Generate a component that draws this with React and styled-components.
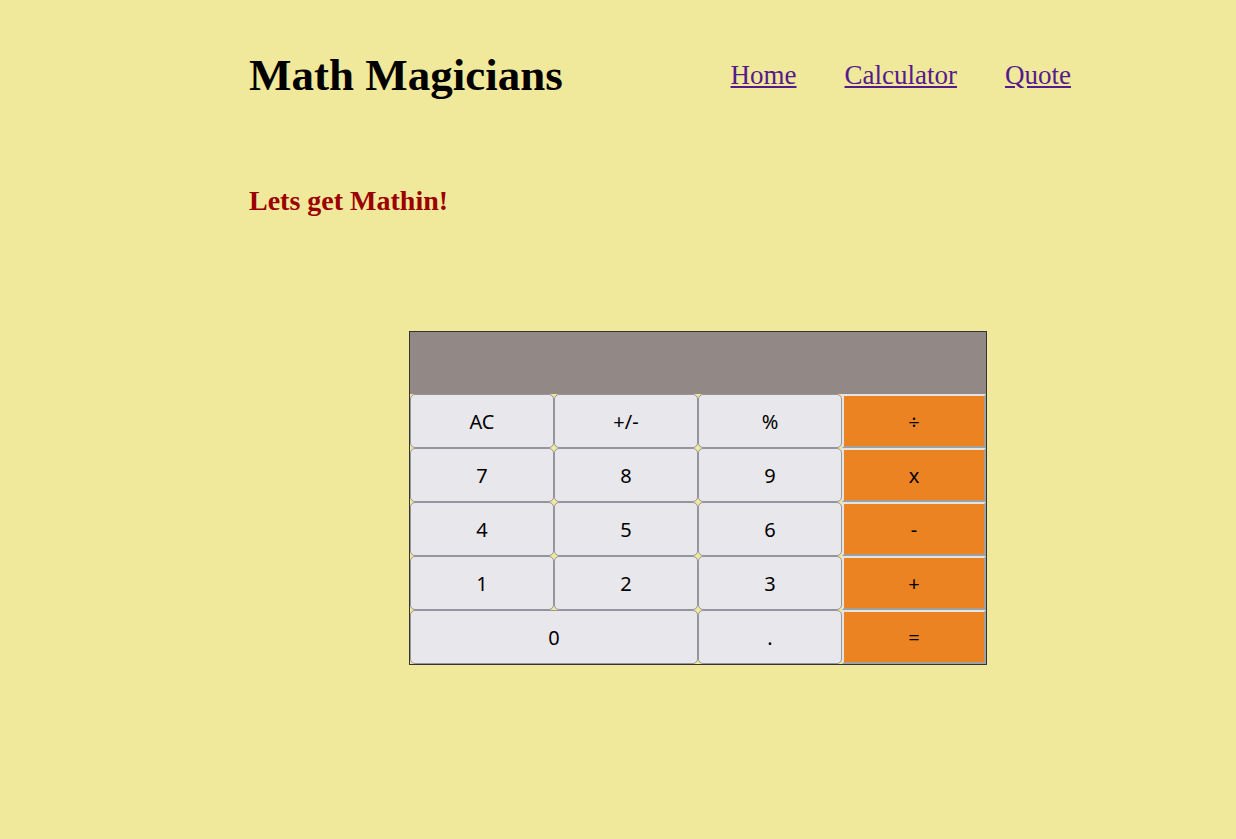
import React from 'react';
import styled, { createGlobalStyle } from 'styled-components';

const GlobalStyle = createGlobalStyle`
  body {
    margin: 0;
    background: #f0e89b;
    font-family: "Liberation Serif", "Times New Roman", serif;
  }
`

const Page = styled.div`
  min-height: 839px;
`

const Header = styled.header`
  display: flex;
  align-items: center;
  justify-content: space-between;
  padding: 49px 165px 0 249px;
`

const Title = styled.h1`
  margin: 0;
  font-size: 45px;
  font-weight: bold;
  color: #000;
`

const Nav = styled.nav`
  display: flex;
  gap: 48px;
`

const NavLink = styled.a`
  font-size: 27px;
  color: #551a8b;
  text-decoration: underline;
`

const Main = styled.main`
  padding-left: 249px;
`

const Subtitle = styled.h2`
  margin: 84px 0 0;
  font-size: 28px;
  font-weight: bold;
  color: #9b0000;
`

const Calculator = styled.div`
  margin: 114px 0 0 160px;
  width: 576px;
  border: 1px solid #333;
`

const Display = styled.div`
  height: 62px;
  background: #928987;
`

const Keys = styled.div`
  display: grid;
  grid-template-columns: repeat(4, 144px);
  grid-auto-rows: 54px;
`

const Key = styled.button`
  box-sizing: border-box;
  margin: 0;
  grid-column: span ${({ $span }) => $span || 1};
  font-family: "Noto Sans", "DejaVu Sans", sans-serif;
  font-size: 20px;
  color: #000;
  background: #e8e7ec;
  border: 1px solid #96949c;
  border-radius: 5px;
  padding: 0;
  cursor: pointer;
`

const OpKey = styled(Key)`
  background: #ec8322;
  border: 2px solid;
  border-color: #e4e4e4 #a0a0a0 #a0a0a0 #e4e4e4;
  border-radius: 0;
`

const rows = [
  ['AC', '+/-', '%', '÷'],
  ['7', '8', '9', 'x'],
  ['4', '5', '6', '-'],
  ['1', '2', '3', '+'],
]

export default function App() {
  return (
    <Page>
      <GlobalStyle />
      <Header>
        <Title>Math Magicians</Title>
        <Nav>
          <NavLink href="#home">Home</NavLink>
          <NavLink href="#calculator">Calculator</NavLink>
          <NavLink href="#quote">Quote</NavLink>
        </Nav>
      </Header>
      <Main>
        <Subtitle>Lets get Mathin!</Subtitle>
        <Calculator>
          <Display />
          <Keys>
            {rows.map((row) => row.map((k, i) => (i === 3
              ? <OpKey key={k} type="button">{k}</OpKey>
              : <Key key={k} type="button">{k}</Key>)))}
            <Key type="button" $span={2}>0</Key>
            <Key type="button">.</Key>
            <OpKey type="button">=</OpKey>
          </Keys>
        </Calculator>
      </Main>
    </Page>
  );
}
